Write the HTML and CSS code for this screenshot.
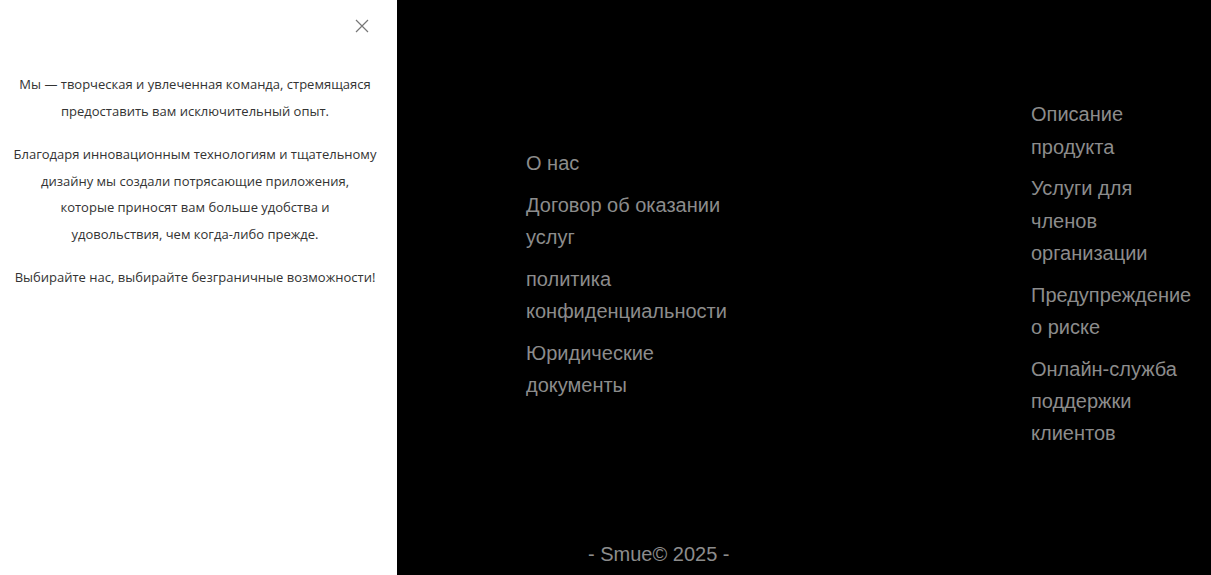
FILE: index.html
```html
<!DOCTYPE html>
<html lang="ru">
<head>
<meta charset="utf-8">
<title>Smue</title>
<link rel="stylesheet" href="styles.css">
</head>
<body>
<div class="page">
  <aside class="panel">
    <div class="panel-top">
      <button class="close" aria-label="Закрыть">
        <svg width="14" height="14" viewBox="0 0 14 14"><path d="M1 1L13 13M13 1L1 13" stroke="#777" stroke-width="1.2" fill="none"/></svg>
      </button>
    </div>
    <div class="about">
      <p>Мы — творческая и увлеченная команда, стремящаяся<br>предоставить вам исключительный опыт.</p>
      <p>Благодаря инновационным технологиям и тщательному<br>дизайну мы создали потрясающие приложения,<br>которые приносят вам больше удобства и<br>удовольствия, чем когда-либо прежде.</p>
      <p>Выбирайте нас, выбирайте безграничные возможности!</p>
    </div>
  </aside>
  <main class="dark">
    <div class="cols">
      <ul class="links col-a">
        <li>О нас</li>
        <li>Договор об оказании услуг</li>
        <li>политика конфиденциальности</li>
        <li>Юридические документы</li>
      </ul>
      <ul class="links col-b">
        <li>Описание продукта</li>
        <li>Услуги для членов организации</li>
        <li>Предупреждение о риске</li>
        <li>Онлайн-служба поддержки клиентов</li>
      </ul>
    </div>
    <footer class="copy">- Smue© 2025 -</footer>
  </main>
</div>
</body>
</html>
```
FILE: styles.css
```css
* { box-sizing: border-box; }
html, body { margin: 0; padding: 0; height: 100%; }
body { background: #000; overflow: hidden; }
.page { display: flex; height: 575px; }
.panel {
  width: 397px;
  flex: none;
  background: #fff;
  font-family: "Open Sans", "Noto Sans", sans-serif;
  color: #333;
}
.panel-top { display: flex; justify-content: flex-end; padding: 19px 28px 0 0; height: 71px; }
.close { background: none; border: 0; padding: 0; width: 14px; height: 14px; cursor: pointer; display: block; }
.close svg { display: block; }
.about { padding: 0 4px; text-align: center; font-size: 13px; line-height: 26.7px; white-space: nowrap; margin-left: -7px; }
.about p { margin: 0 0 16.5px; }
.dark {
  flex: 1;
  display: flex;
  flex-direction: column;
  font-family: "Liberation Sans", Arial, sans-serif;
  color: #8c8c8c;
  font-size: 20px;
  line-height: 32.3px;
}
.cols { flex: 1; display: flex; align-items: center; padding: 14px 0 0 129px; }
.links { list-style: none; margin: 0; padding: 0; }
.links li { margin: 0 0 9.5px; }
.links li:last-child { margin-bottom: 0; }
.col-a { width: 210px; }
.col-b { width: 166px; margin-left: 295px; }
.copy { padding: 4px 0 0 191px; height: 41px; }
```
